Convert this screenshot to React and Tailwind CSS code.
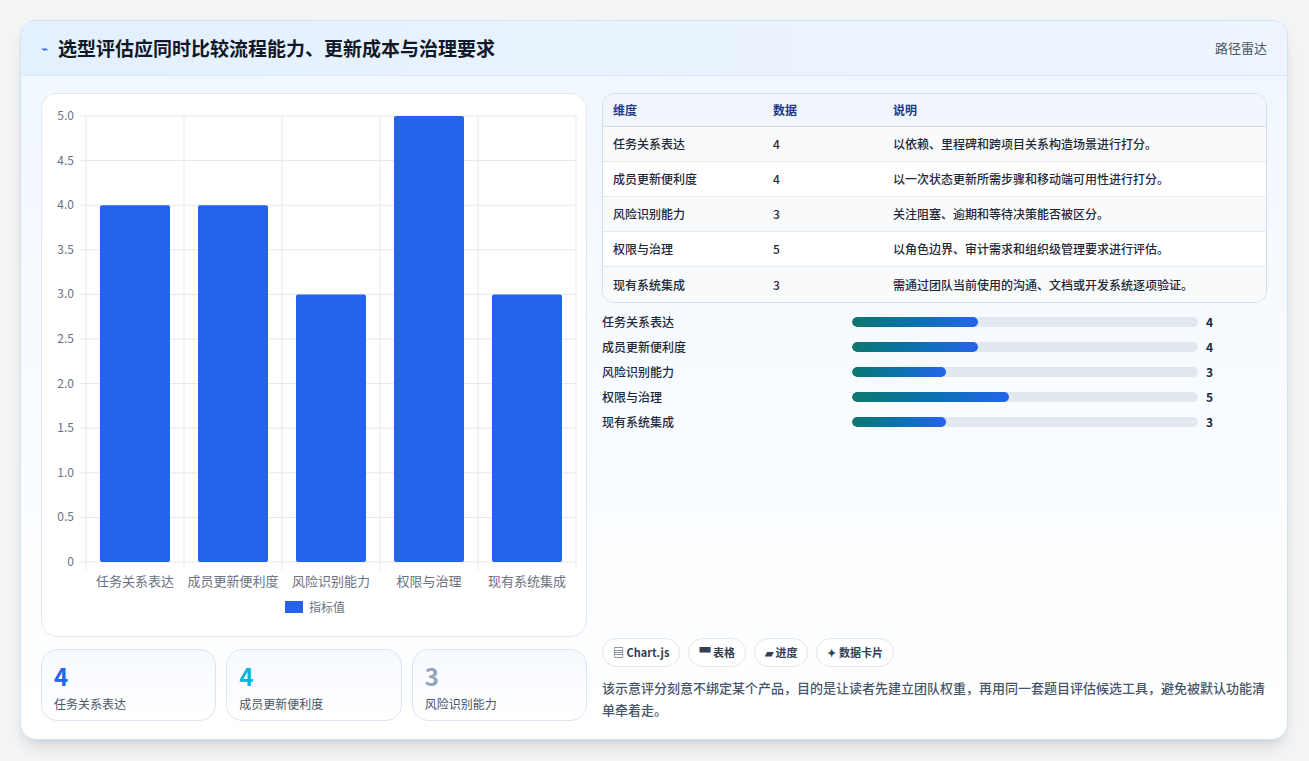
const rows = [
  { name: '任务关系表达', v: 4, note: '以依赖、里程碑和跨项目关系构造场景进行打分。', w: 126 },
  { name: '成员更新便利度', v: 4, note: '以一次状态更新所需步骤和移动端可用性进行打分。', w: 126 },
  { name: '风险识别能力', v: 3, note: '关注阻塞、逾期和等待决策能否被区分。', w: 94 },
  { name: '权限与治理', v: 5, note: '以角色边界、审计需求和组织级管理要求进行评估。', w: 157 },
  { name: '现有系统集成', v: 3, note: '需通过团队当前使用的沟通、文档或开发系统逐项验证。', w: 94 },
]

const font = { fontFamily: '"Noto Sans CJK SC", "Noto Sans", sans-serif' }

function Chart() {
  // plot area inside svg: x 44..534, y 22..468
  const x0 = 44, x1 = 534, y0 = 22, y1 = 468
  const cw = (x1 - x0) / 5
  const ticks = [5, 4.5, 4, 3.5, 3, 2.5, 2, 1.5, 1, 0.5, 0]
  const yOf = (v) => y1 - (v / 5) * (y1 - y0)
  return (
    <svg width="546" height="543" className="block">
      {ticks.map(t => (
        <g key={t}>
          <line x1={x0 - 6} x2={x1} y1={yOf(t)} y2={yOf(t)} stroke="#e5e7eb" />
          <text x={x0 - 12} y={yOf(t) + 4} textAnchor="end" fontSize="12" fill="#6b7280">{t === 0 ? '0' : t.toFixed(1)}</text>
        </g>
      ))}
      {[0, 1, 2, 3, 4, 5].map(i => (
        <line key={i} x1={x0 + i * cw} x2={x0 + i * cw} y1={y0} y2={y1 + 8} stroke="#e5e7eb" />
      ))}
      {rows.map((r, i) => (
        <g key={r.name}>
          <rect x={x0 + i * cw + 14} y={yOf(r.v)} width={cw - 28} height={y1 - yOf(r.v)} rx="2" fill="#2563eb" />
          <text x={x0 + i * cw + cw / 2} y={y1 + 24} textAnchor="middle" fontSize="13" fill="#6b7280">{r.name}</text>
        </g>
      ))}
      <rect x="243" y="507" width="18" height="12" fill="#2563eb" />
      <text x="267" y="518" fontSize="12" fill="#6b7280">指标值</text>
    </svg>
  )
}

export default function App() {
  return (
    <div className="min-h-screen bg-[#f3f4f6] pt-5 px-5" style={font}>
      <div className="w-[1268px] h-[720px] rounded-2xl border border-[#cfe3f3] bg-gradient-to-b from-[#f0f7ff] to-white shadow-lg overflow-hidden flex flex-col">
        <div className="h-[55px] shrink-0 flex items-center justify-between px-5 bg-gradient-to-r from-[#e3f0fd] to-[#eef5ff] border-b border-[#dbe8f5]">
          <div className="flex items-center gap-2.5">
            <span className="text-[#2563eb] text-xs">⌁</span>
            <h1 className="text-[19px] font-bold text-[#111827]">选型评估应同时比较流程能力、更新成本与治理要求</h1>
          </div>
          <span className="text-[13px] text-[#4b5563]">路径雷达</span>
        </div>
        <div className="flex-1 flex gap-[15px] px-5 pt-[17px] pb-[18px]">
          <div className="w-[546px] flex flex-col gap-3">
            <div className="h-[544px] rounded-2xl border border-[#e2e8f0] bg-white overflow-hidden">
              <Chart />
            </div>
            <div className="grid grid-cols-3 gap-2.5 flex-1">
              {[['4', 'text-[#2563eb]', '任务关系表达'], ['4', 'text-[#06b6d4]', '成员更新便利度'], ['3', 'text-[#94a3b8]', '风险识别能力']].map(([v, c, l]) => (
                <div key={l} className="rounded-2xl border border-[#dbe5f2] bg-gradient-to-b from-[#f6f9ff] to-white px-3 pt-3">
                  <div className={`text-[24px] leading-7 font-bold ${c}`}>{v}</div>
                  <div className="text-xs text-[#4b5563] mt-1.5">{l}</div>
                </div>
              ))}
            </div>
          </div>
          <div className="flex-1 flex flex-col">
            <div className="rounded-xl border border-[#d3dde9] overflow-hidden bg-white text-xs">
              <div className="flex h-[33px] items-center bg-[#f1f6fd] border-b border-[#d3dde9] text-[#1e3a8a] font-semibold px-2.5">
                <div className="w-[160px]">维度</div><div className="w-[120px]">数据</div><div>说明</div>
              </div>
              {rows.map((r, i) => (
                <div key={r.name} className={`flex h-[35px] items-center px-2.5 text-[#1f2937] font-medium ${i % 2 === 0 ? 'bg-[#f8fafc]' : 'bg-white'} ${i < 4 ? 'border-b border-[#e5ebf2]' : ''}`}>
                  <div className="w-[160px]">{r.name}</div><div className="w-[120px]">{r.v}</div><div>{r.note}</div>
                </div>
              ))}
            </div>
            <div className="mt-[10px] flex flex-col gap-[7px]">
              {rows.map(r => (
                <div key={r.name} className="flex items-center h-[18px] text-xs text-[#1f2937] font-medium">
                  <div className="w-[250px]">{r.name}</div>
                  <div className="w-[346px] h-[10px] rounded-full bg-[#e2e8f0] overflow-hidden">
                    <div className="h-full rounded-full bg-gradient-to-r from-[#0f766e] to-[#2563eb]" style={{ width: r.w }} />
                  </div>
                  <div className="ml-2 font-bold">{r.v}</div>
                </div>
              ))}
            </div>
            <div className="flex-1" />
            <div className="flex gap-2">
              {['▤ Chart.js', '▀ 表格', '▰ 进度', '✦ 数据卡片'].map(t => (
                <span key={t} className="h-[29px] px-2.5 flex items-center rounded-full border border-[#e2e8f0] bg-white text-[11px] font-semibold text-[#334155]">{t}</span>
              ))}
            </div>
            <p className="mt-[10px] text-[13px] leading-[22px] font-medium text-[#475569]">该示意评分刻意不绑定某个产品，目的是让读者先建立团队权重，再用同一套题目评估候选工具，避免被默认功能清单牵着走。</p>
          </div>
        </div>
      </div>
    </div>
  )
}
